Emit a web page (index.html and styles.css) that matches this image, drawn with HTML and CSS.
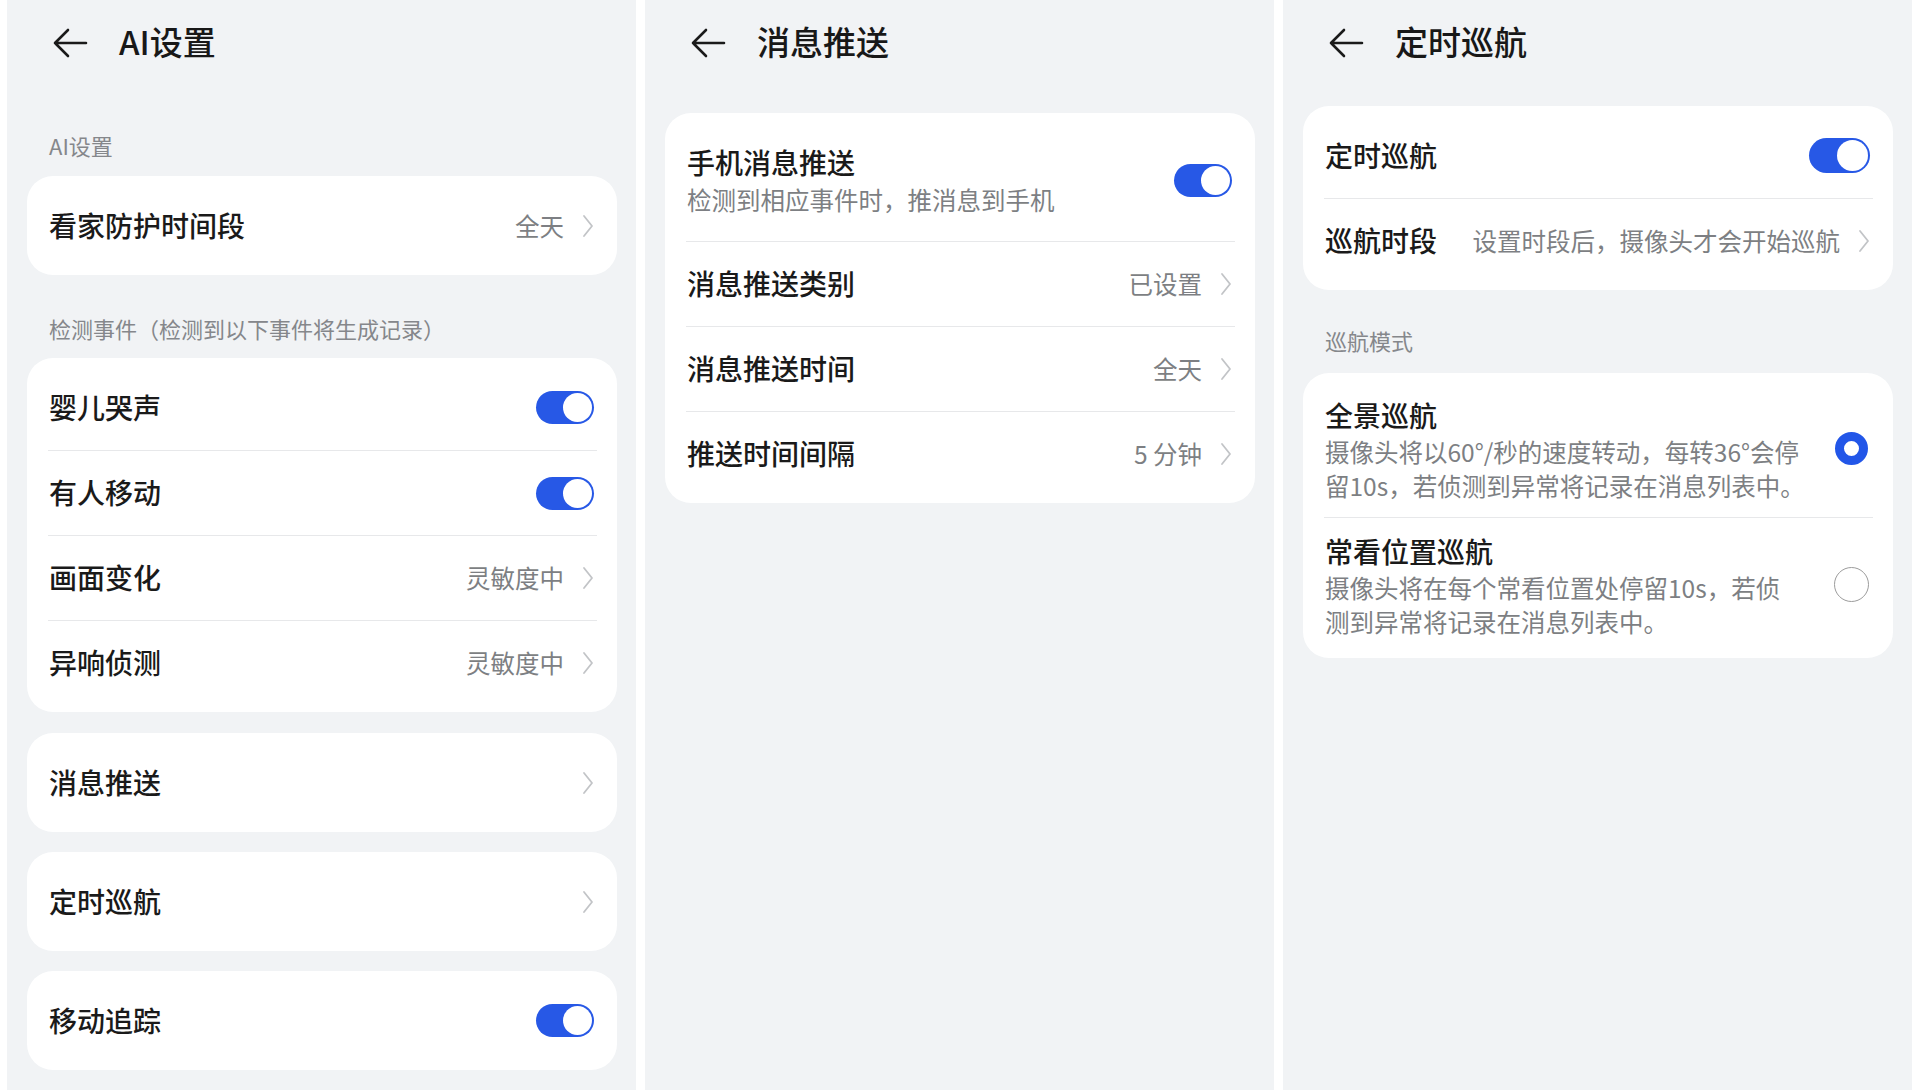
FILE: index.html
```html
<!DOCTYPE html>
<html lang="zh-CN">
<head>
<meta charset="utf-8">
<title>AI设置</title>
<link rel="stylesheet" href="styles.css">
</head>
<body>
<div class="screen">

  <section class="panel">
    <header class="bar">
      <svg class="back" viewBox="0 0 36 32" width="36" height="32"><path d="M34 16H3M16 3L3 16L16 29" fill="none" stroke="#1a1a1a" stroke-width="2.6" stroke-linecap="round" stroke-linejoin="round"/></svg>
      <h1 class="title">AI设置</h1>
    </header>
    <div class="label label-top">AI设置</div>
    <div class="card">
      <div class="row"><span class="t">看家防护时间段</span><span class="v">全天</span><svg class="chev" viewBox="0 0 12 24" width="12" height="24"><path d="M2 2L10 12L2 22" fill="none" stroke="#c2c4c7" stroke-width="1.8" stroke-linecap="round" stroke-linejoin="round"/></svg></div>
    </div>
    <div class="label label-mid">检测事件（检测到以下事件将生成记录）</div>
    <div class="card">
      <div class="row"><span class="t">婴儿哭声</span><span class="toggle"></span></div>
      <div class="row"><span class="t">有人移动</span><span class="toggle"></span></div>
      <div class="row"><span class="t">画面变化</span><span class="v">灵敏度中</span><svg class="chev" viewBox="0 0 12 24" width="12" height="24"><path d="M2 2L10 12L2 22" fill="none" stroke="#c2c4c7" stroke-width="1.8" stroke-linecap="round" stroke-linejoin="round"/></svg></div>
      <div class="row"><span class="t">异响侦测</span><span class="v">灵敏度中</span><svg class="chev" viewBox="0 0 12 24" width="12" height="24"><path d="M2 2L10 12L2 22" fill="none" stroke="#c2c4c7" stroke-width="1.8" stroke-linecap="round" stroke-linejoin="round"/></svg></div>
    </div>
    <div class="card card-after-group">
      <div class="row"><span class="t">消息推送</span><svg class="chev push" viewBox="0 0 12 24" width="12" height="24"><path d="M2 2L10 12L2 22" fill="none" stroke="#c2c4c7" stroke-width="1.8" stroke-linecap="round" stroke-linejoin="round"/></svg></div>
    </div>
    <div class="card card-next">
      <div class="row"><span class="t">定时巡航</span><svg class="chev push" viewBox="0 0 12 24" width="12" height="24"><path d="M2 2L10 12L2 22" fill="none" stroke="#c2c4c7" stroke-width="1.8" stroke-linecap="round" stroke-linejoin="round"/></svg></div>
    </div>
    <div class="card card-next">
      <div class="row"><span class="t">移动追踪</span><span class="toggle"></span></div>
    </div>
  </section>

  <section class="panel">
    <header class="bar">
      <svg class="back" viewBox="0 0 36 32" width="36" height="32"><path d="M34 16H3M16 3L3 16L16 29" fill="none" stroke="#1a1a1a" stroke-width="2.6" stroke-linecap="round" stroke-linejoin="round"/></svg>
      <h1 class="title">消息推送</h1>
    </header>
    <div class="card card-p2">
      <div class="row row-tall">
        <div class="stack">
          <span class="t">手机消息推送</span>
          <span class="sub">检测到相应事件时，推消息到手机</span>
        </div>
        <span class="toggle"></span>
      </div>
      <div class="row"><span class="t">消息推送类别</span><span class="v">已设置</span><svg class="chev" viewBox="0 0 12 24" width="12" height="24"><path d="M2 2L10 12L2 22" fill="none" stroke="#c2c4c7" stroke-width="1.8" stroke-linecap="round" stroke-linejoin="round"/></svg></div>
      <div class="row"><span class="t">消息推送时间</span><span class="v">全天</span><svg class="chev" viewBox="0 0 12 24" width="12" height="24"><path d="M2 2L10 12L2 22" fill="none" stroke="#c2c4c7" stroke-width="1.8" stroke-linecap="round" stroke-linejoin="round"/></svg></div>
      <div class="row"><span class="t">推送时间间隔</span><span class="v">5 分钟</span><svg class="chev" viewBox="0 0 12 24" width="12" height="24"><path d="M2 2L10 12L2 22" fill="none" stroke="#c2c4c7" stroke-width="1.8" stroke-linecap="round" stroke-linejoin="round"/></svg></div>
    </div>
  </section>

  <section class="panel">
    <header class="bar">
      <svg class="back" viewBox="0 0 36 32" width="36" height="32"><path d="M34 16H3M16 3L3 16L16 29" fill="none" stroke="#1a1a1a" stroke-width="2.6" stroke-linecap="round" stroke-linejoin="round"/></svg>
      <h1 class="title">定时巡航</h1>
    </header>
    <div class="card card-p3">
      <div class="row"><span class="t">定时巡航</span><span class="toggle toggle-lg"></span></div>
      <div class="row"><span class="t">巡航时段</span><span class="v">设置时段后，摄像头才会开始巡航</span><svg class="chev" viewBox="0 0 12 24" width="12" height="24"><path d="M2 2L10 12L2 22" fill="none" stroke="#c2c4c7" stroke-width="1.8" stroke-linecap="round" stroke-linejoin="round"/></svg></div>
    </div>
    <div class="label label-mode">巡航模式</div>
    <div class="card">
      <div class="row row-mode">
        <div class="stack">
          <span class="t t-mode">全景巡航</span>
          <span class="desc">摄像头将以60°/秒的速度转动，每转36°会停</span>
          <span class="desc">留10s，若侦测到异常将记录在消息列表中。</span>
        </div>
        <span class="radio on"></span>
      </div>
      <div class="row row-mode row-mode2">
        <div class="stack">
          <span class="t t-mode">常看位置巡航</span>
          <span class="desc">摄像头将在每个常看位置处停留10s，若侦</span>
          <span class="desc">测到异常将记录在消息列表中。</span>
        </div>
        <span class="radio"></span>
      </div>
    </div>
  </section>

</div>
</body>
</html>
```

FILE: styles.css
```css
* { box-sizing: border-box; }

html, body {
  margin: 0;
  padding: 0;
  background: #ffffff;
}

body {
  font-family: "Noto Sans CJK SC", "Noto Sans", sans-serif;
  color: #1a1a1a;
  width: 1920px;
  height: 1092px;
  overflow: hidden;
}

.screen {
  display: flex;
  gap: 9px;
  padding-left: 7px;
}

.panel {
  width: 629px;
  height: 1090px;
  background: #f1f3f5;
  display: flex;
  flex-direction: column;
}

.bar {
  height: 86px;
  display: flex;
  align-items: center;
  padding-left: 45px;
}

.back {
  display: block;
  flex: none;
}

.title {
  margin: 0 0 4px 31px;
  font-size: 33px;
  line-height: 40px;
  font-weight: 500;
  color: #181818;
}

.label {
  font-size: 22px;
  line-height: 30px;
  color: #85878b;
  padding: 0 0 16px 42px;
}

.label-top { margin-top: 44px; }
.label-mid { margin-top: 38px; padding-bottom: 15px; }
.label-mode { margin-top: 35px; padding-bottom: 18px; }

.card {
  margin: 0 19px 0 20px;
  width: 590px;
  background: #ffffff;
  border-radius: 26px;
  padding: 7px 20px 7px 21px;
}

.card-after-group { margin-top: 21px; }
.card-next { margin-top: 20px; }
.card-p2 { margin-top: 27px; }
.card-p3 { margin-top: 20px; }

.row {
  height: 85px;
  display: flex;
  align-items: center;
  padding: 0 3px 0 1px;
}

.row + .row {
  border-top: 1.5px solid #e7e8ea;
}

.t {
  font-size: 28px;
  line-height: 38px;
  font-weight: 500;
  color: #1a1a1a;
  white-space: nowrap;
  margin-bottom: 2px;
}

.v {
  margin-left: auto;
  margin-right: 18px;
  font-size: 24.5px;
  line-height: 34px;
  color: #7d7f83;
  white-space: nowrap;
}

.chev {
  display: block;
  flex: none;
}

.chev.push { margin-left: auto; }

.toggle {
  margin-left: auto;
  width: 58px;
  height: 33px;
  border-radius: 17px;
  background: #2758e6;
  position: relative;
  flex: none;
}

.toggle::after {
  content: "";
  position: absolute;
  top: 2px;
  right: 2px;
  width: 29px;
  height: 29px;
  border-radius: 50%;
  background: #ffffff;
}

.toggle-lg {
  width: 61px;
  height: 35px;
  border-radius: 18px;
}

.toggle-lg::after {
  width: 31px;
  height: 31px;
}

.row-tall {
  height: 121px;
}

.stack {
  display: flex;
  flex-direction: column;
}

.stack .t {
  margin-bottom: 0;
}

.sub {
  font-size: 24.5px;
  line-height: 38px;
  color: #7d7f83;
  white-space: nowrap;
}

.row-mode {
  height: 137px;
  align-items: center;
}

.row-mode2 {
  height: 134px;
}

.t-mode {
  line-height: 40px;
}

.desc {
  font-size: 24.5px;
  line-height: 34px;
  color: #7d7f83;
  white-space: nowrap;
}

.radio {
  margin-left: auto;
  margin-right: 1px;
  width: 35px;
  height: 35px;
  border-radius: 50%;
  border: 1.5px solid #9c9c9c;
  flex: none;
}

.radio.on {
  width: 33px;
  height: 33px;
  margin-right: 2px;
  border: 9px solid #2256e8;
}
```
